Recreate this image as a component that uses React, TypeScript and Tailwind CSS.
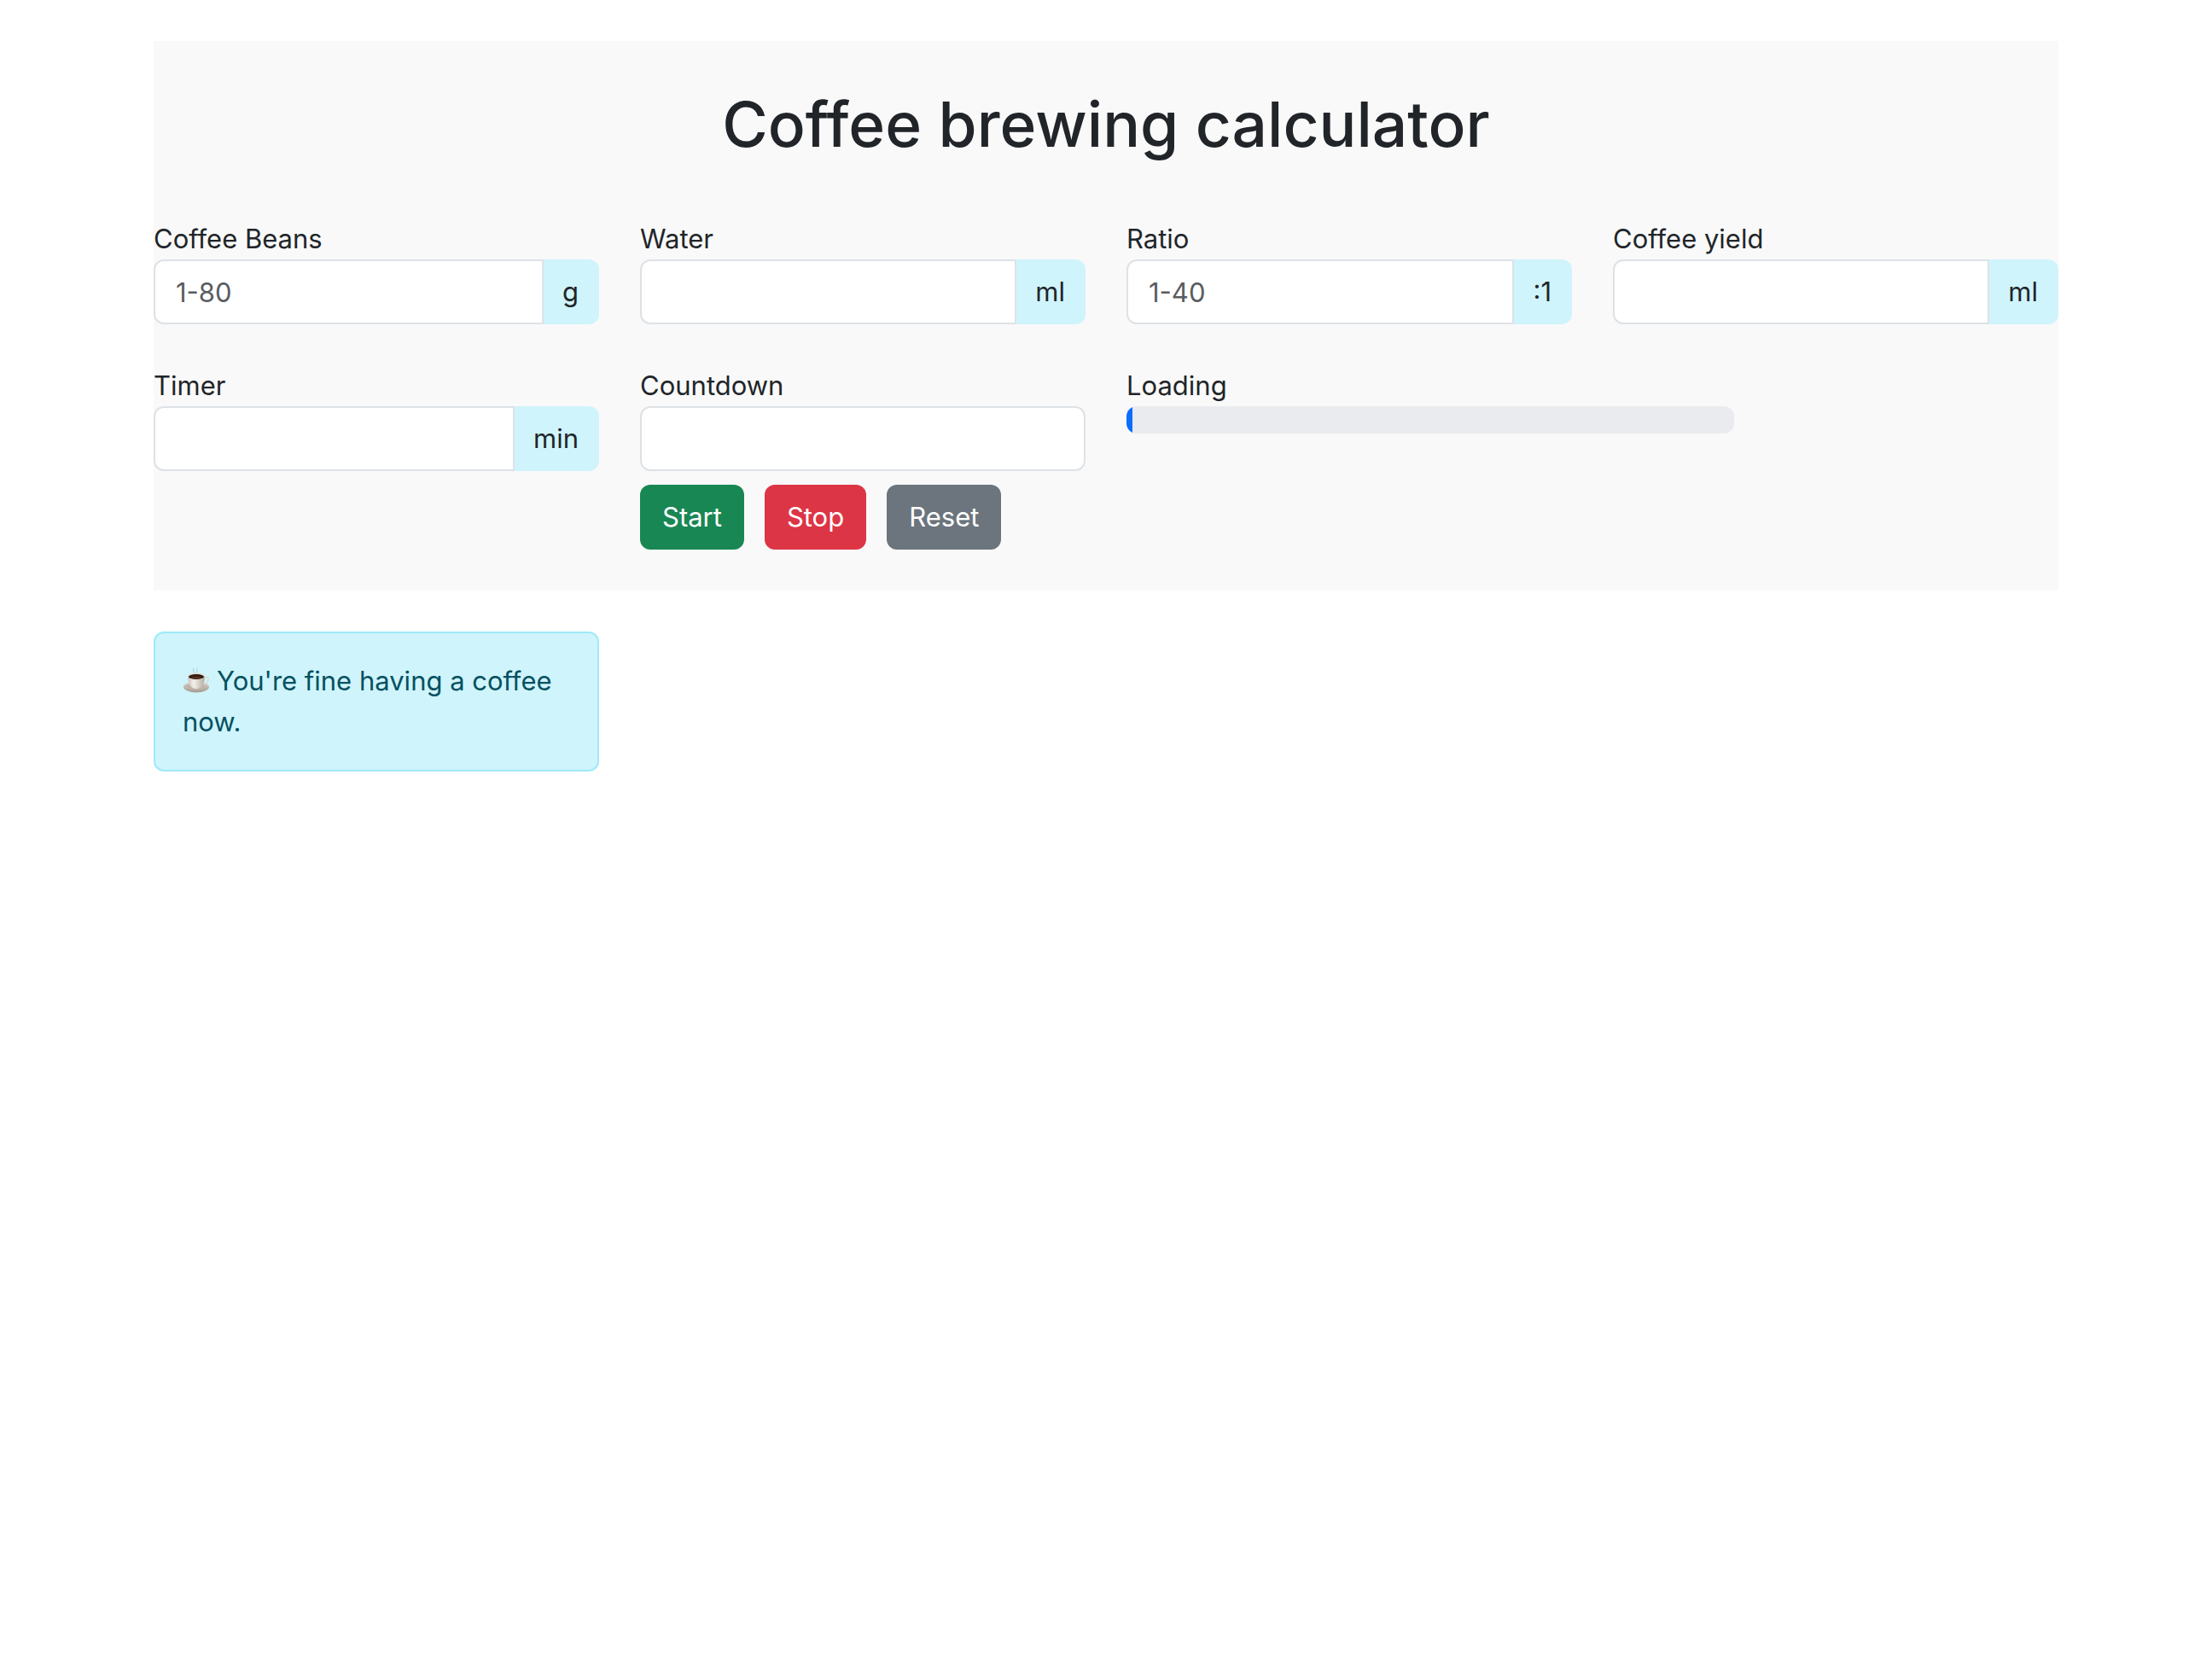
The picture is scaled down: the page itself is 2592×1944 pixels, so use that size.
import React, { useId } from "react";

type FieldProps = {
  label: string;
  unit?: string;
  placeholder?: string;
  children?: React.ReactNode;
};

function Field({ label, unit, placeholder, children }: FieldProps) {
  const id = useId();
  return (
    <div className="min-w-0">
      <label htmlFor={id} className="block">
        {label}
      </label>
      <div className="flex">
        <input
          id={id}
          type="text"
          placeholder={placeholder}
          className={
            unit
              ? "h-[76px] w-0 min-w-0 flex-1 rounded-l-xl border-2 border-[#dee2e6] bg-white px-6 placeholder:text-[#595c5f]"
              : "h-[76px] w-0 min-w-0 flex-1 rounded-xl border-2 border-[#dee2e6] bg-white px-6 placeholder:text-[#595c5f]"
          }
        />
        {unit && (
          <span className="flex items-center rounded-r-xl bg-[#cff4fc] pr-6 pl-[22px]">
            {unit}
          </span>
        )}
      </div>
      {children}
    </div>
  );
}

function CoffeeCup() {
  return (
    <svg
      viewBox="0 0 64 64"
      role="img"
      aria-label="Coffee"
      className="mr-2 inline-block size-8 align-[-5px]"
    >
      <defs>
        <linearGradient id="cup-body" x1="0" x2="1" y1="0" y2="0">
          <stop offset="0" stopColor="#c9c3b8" />
          <stop offset="0.35" stopColor="#f3f0ea" />
          <stop offset="1" stopColor="#b3aca0" />
        </linearGradient>
        <linearGradient id="saucer" x1="0" x2="0" y1="0" y2="1">
          <stop offset="0" stopColor="#dcd7cf" />
          <stop offset="1" stopColor="#a39c92" />
        </linearGradient>
      </defs>
      <path d="M27 12c-5-3 1-5-2-9M33 12c4-4-2-6 0-9" fill="none" stroke="#a3c9cf" strokeWidth="2" strokeLinecap="round" />
      <ellipse cx="32" cy="46" rx="30" ry="13" fill="url(#saucer)" />
      <ellipse cx="31" cy="45" rx="22" ry="8" fill="#bdb5a9" />
      <path d="M50 25c7-4 12-1 10 5-2 6-8 8-14 9" fill="none" stroke="#ddd8d0" strokeWidth="3" strokeLinecap="round" />
      <path d="M12 20c0 17 6 30 20 30s20-13 20-30z" fill="url(#cup-body)" />
      <ellipse cx="32" cy="21" rx="20" ry="8" fill="#e0dad0" />
      <ellipse cx="32" cy="22" rx="18" ry="6" fill="#2f1a12" />
      <ellipse cx="32" cy="24" rx="12" ry="3" fill="#54301f" />
    </svg>
  );
}

const buttonColors = [
  { label: "Start", color: "bg-[#198754]" },
  { label: "Stop", color: "bg-[#dc3545]" },
  { label: "Reset", color: "bg-[#6c757d]" },
];

export default function App() {
  const progress = 1;
  return (
    <div className="min-h-screen bg-white font-['Inter',sans-serif] text-[31px] leading-[48px] text-[#212529]">
      <div className="mx-auto w-full max-w-[2232px] py-12">
        <main className="bg-[#f9f9f9] py-12">
          <h1 className="mb-[60px] text-center text-[73px] leading-[100px] font-medium">
            Coffee brewing calculator
          </h1>
          <div className="grid grid-cols-4 gap-12">
            <Field label="Coffee Beans" unit="g" placeholder="1-80" />
            <Field label="Water" unit="ml" />
            <Field label="Ratio" unit=":1" placeholder="1-40" />
            <Field label="Coffee yield" unit="ml" />
            <Field label="Timer" unit="min" />
            <Field label="Countdown">
              <div className="mt-4 flex gap-6">
                {buttonColors.map((b) => (
                  <button
                    key={b.label}
                    type="button"
                    className={`h-[76px] rounded-xl px-[26px] text-white ${b.color}`}
                  >
                    {b.label}
                  </button>
                ))}
              </div>
            </Field>
            <div className="col-span-2">
              <div id="loading-label">Loading</div>
              <div
                role="progressbar"
                aria-labelledby="loading-label"
                aria-valuenow={progress}
                aria-valuemin={0}
                aria-valuemax={100}
                className="h-8 w-full max-w-[712px] overflow-hidden rounded-xl bg-[#e9ebef]"
              >
                <div className="h-full bg-[#0d6efd]" style={{ width: `${progress}%` }} />
              </div>
            </div>
          </div>
        </main>
        <div className="mt-12 grid grid-cols-4 gap-12">
          <div
            role="alert"
            className="rounded-xl border-2 border-[#9eeaf9] bg-[#cff4fc] p-8 text-[#055160]"
          >
            <CoffeeCup />
            You're fine having a coffee now.
          </div>
        </div>
      </div>
    </div>
  );
}
